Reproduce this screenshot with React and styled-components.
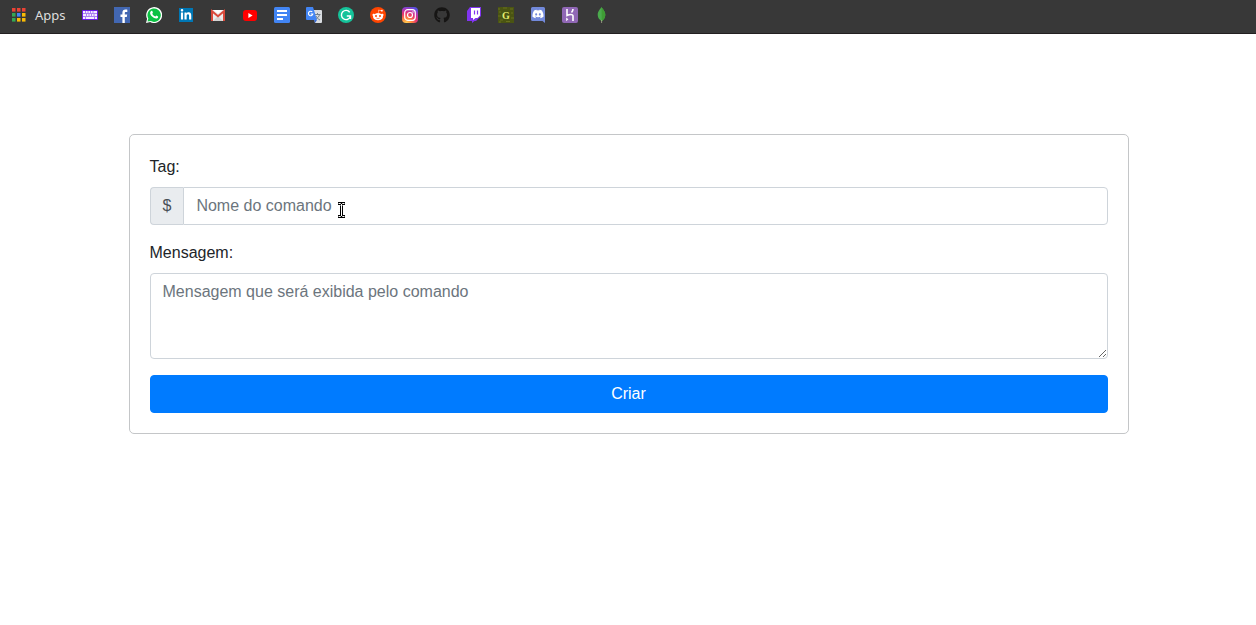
import React from 'react';
import styled, { createGlobalStyle } from 'styled-components';
import { FaGithub, FaLinkedinIn, FaDiscord, FaRedditAlien } from 'react-icons/fa';

const GlobalStyle = createGlobalStyle`
  *, *::before, *::after { box-sizing: border-box; }
  body {
    margin: 0;
    background: #fff;
    color: #212529;
    font: 400 16px/24px "Liberation Sans", Arial, sans-serif;
  }
`;

const BookmarkBar = styled.nav`
  display: flex;
  align-items: center;
  gap: 16px;
  height: 34px;
  padding: 0 10px 3px;
  background: #383838;
  border-bottom: 1px solid #231f20;
`;

const Bookmark = styled.a`
  display: flex;
  align-items: center;
  gap: 9px;
  color: #dedede;
  font: 13px/16px "Noto Sans", "Open Sans", sans-serif;
  text-decoration: none;
`;

const Icon = styled.svg.attrs({ viewBox: '0 0 16 16', 'aria-hidden': true })`
  display: block;
  width: 16px;
  height: 16px;
  flex: none;
`;

const Page = styled.main`
  padding: 100px 16px 100px 17px;
`;

const Card = styled.form`
  max-width: 1000px;
  margin: 0 auto;
  padding: 20px;
  border: 1px solid #c4c6c8;
  border-radius: 5px;
`;

const Field = styled.div`
  margin-bottom: 16px;
`;

const Label = styled.label`
  display: block;
  margin-bottom: 8px;
`;

const InputGroup = styled.div`
  position: relative;
  display: flex;
`;

const Prefix = styled.span`
  padding: 6px 12px;
  color: #495057;
  background: #e9ecef;
  border: 1px solid #ced4da;
  border-right: 0;
  border-radius: 4px 0 0 4px;
`;

const controlStyles = `
  display: block;
  width: 100%;
  margin: 0;
  padding: 6px 12px;
  color: #495057;
  background: #fff;
  border: 1px solid #ced4da;
  font: inherit;
  outline: 0;
  &::placeholder { color: #6c757d; opacity: 1; }
`;

const TextInput = styled.input`
  ${controlStyles}
  flex: 1;
  min-width: 0;
  height: 38px;
  border-radius: 0 4px 4px 0;
`;

const TextArea = styled.textarea`
  ${controlStyles}
  height: 86px;
  border-radius: 4px;
  resize: vertical;
`;

const SubmitButton = styled.button`
  display: block;
  width: 100%;
  padding: 6px 12px;
  color: #fff;
  background: #007bff;
  border: 1px solid #007bff;
  border-radius: 4px;
  font: inherit;
  cursor: pointer;
`;

const Pointer = styled.svg`
  position: absolute;
  left: 187px;
  top: 15px;
  width: 9px;
  height: 16px;
  pointer-events: none;
`;

const appColors = ['#ea4335', '#ea4335', '#ea4335', '#34a853', '#4285f4', '#fbbc05', '#34a853', '#fbbc05', '#fbbc05'];

const AppsIcon = () => (
  <Icon>
    {appColors.map((fill, i) => (
      <rect key={i} x={2 + (i % 3) * 5} y={1 + Math.floor(i / 3) * 5} width="3.5" height="3.6" fill={fill} />
    ))}
  </Icon>
);

const bookmarks = [
  ['Teclado', (
    <Icon>
      <rect y="3" width="16" height="10" rx="1" fill="#6d1bea" />
      <rect x="1" y="4" width="14" height="8" fill="#f4edff" />
      <path d="M3.5 4v2M6 4v2M8.5 4v2M11 4v2M1 6.500h14M4.500 7v2M7 7v2M9.500 7v2M12 7v2M1 9.500h14M3.500 10v2M12.500 10v2" stroke="#8d4df0" strokeWidth=".7" />
    </Icon>
  )],
  ['Facebook', (
    <Icon>
      <rect width="16" height="16" fill="#4267b2" />
      <path d="M8.4 16V10H6.5V7.5h1.9V5.7c0-2 1.2-3.1 3-3.1.9 0 1.7.1 1.9.1v2.2H12c-1 0-1.2.5-1.2 1.2v1.4h2.4l-.4 2.5h-2v6z" fill="#fff" />
    </Icon>
  )],
  ['WhatsApp', (
    <Icon>
      <path d="M0 16l1.1-4.2A8 8 0 1 1 4.2 15z" fill="#fff" />
      <path d="M1.5 14.5l.8-3A6.7 6.7 0 1 1 4.8 14z" fill="#0cc143" />
      <path d="M5.2 4c.5-.5 1-.3 1.1.1l.6 1.4c.1.4-.6.9-.6 1.2.7 1.4 1.7 2.2 3 2.8.4.1.8-1 1.2-.9l1.5.8c.5.3-.1 1.5-.7 1.9-2.5 1.3-7.4-2.6-7.2-5.5 0-.8.5-1.4 1.1-1.8z" fill="#fff" />
    </Icon>
  )],
  ['LinkedIn', (
    <Icon>
      <rect x="1" y="1" width="14" height="14" fill="#0077b5" />
      <FaLinkedinIn x="2" y="2" size={12} color="#fff" />
    </Icon>
  )],
  ['Gmail', (
    <Icon>
      <path d="M1 3h14v11H1z" fill="#ececec" />
      <path d="M3 14l5-5 5 5z" fill="#d3d3d3" />
      <path d="M2 14V4.2l6 5 6-5V14" fill="none" stroke="#d94a3c" strokeWidth="2" />
      <path d="M3.5 3h9L8 6.8z" fill="#fff" />
    </Icon>
  )],
  ['YouTube', (
    <Icon>
      <rect x="1" y="3" width="14" height="11" rx="3" fill="#f00" />
      <path d="M6.4 6v5l4.2-2.5z" fill="#fff" />
    </Icon>
  )],
  ['Documentos', (
    <Icon>
      <rect width="16" height="16" rx="1.5" fill="#4285f4" />
      <path d="M3 3h10v2H3zM3 7h10v2H3zM3 11h6v2H3z" fill="#fff" />
    </Icon>
  )],
  ['Tradutor', (
    <Icon>
      <path d="M6 3h9a1 1 0 0 1 1 1v11a1 1 0 0 1-1 1H9z" fill="#d9dce0" />
      <path d="M8.5 7.5h6M11.5 6v1.5M13.5 7.5c-.5 2.4-2 3.5-3.5 4.5M10 9c.8 1.7 2 3 4 4" fill="none" stroke="#74808a" />
      <path d="M8.2 13H11l-2 3z" fill="#3367d6" />
      <path d="M1 0h6l4 13H1a1 1 0 0 1-1-1V1a1 1 0 0 1 1-1z" fill="#4285f4" />
      <path d="M6.3 5A2.2 2.2 0 1 0 6.8 7H4.7" fill="none" stroke="#fff" strokeWidth="1.1" />
    </Icon>
  )],
  ['Grammarly', (
    <Icon>
      <circle cx="8" cy="8" r="8" fill="#15c39a" />
      <path d="M11.7 5.2A4.6 4.6 0 1 0 12.2 10M8.8 9h3.7v3" fill="none" stroke="#fff" strokeWidth="1.4" />
    </Icon>
  )],
  ['Reddit', (
    <Icon>
      <circle cx="8" cy="8" r="8" fill="#ff4500" />
      <FaRedditAlien x="2" y="2" size={12} color="#fff" />
      <ellipse cx="8" cy="9.6" rx="4.4" ry="3.2" fill="#fff" />
      <circle cx="6" cy="9" r="1" fill="#ff4500" />
      <circle cx="10" cy="9" r="1" fill="#ff4500" />
      <path d="M6.3 11.1q1.7 1 3.4 0" fill="none" stroke="#ff4500" strokeWidth=".6" />
    </Icon>
  )],
  ['Instagram', (
    <Icon>
      <defs>
        <radialGradient id="ig" cx=".27" cy="1.05" r="1.1">
          <stop offset="0" stopColor="#ffdd55" />
          <stop offset=".3" stopColor="#ff8a3c" />
          <stop offset=".6" stopColor="#e6326f" />
          <stop offset=".82" stopColor="#b437b6" />
          <stop offset="1" stopColor="#5a4fe0" />
        </radialGradient>
      </defs>
      <rect width="16" height="16" rx="4" fill="url(#ig)" />
      <rect x="2.7" y="2.7" width="10.6" height="10.6" rx="3" fill="none" stroke="#fff" strokeWidth="1.2" />
      <circle cx="8" cy="8" r="2.5" fill="none" stroke="#fff" strokeWidth="1.2" />
      <circle cx="11" cy="5" r=".7" fill="#fff" />
    </Icon>
  )],
  ['GitHub', <Icon><FaGithub size={16} color="#161514" /></Icon>],
  ['Twitch', (
    <Icon>
      <path d="M4 0h11v9l-5 5H8.5L6 16v-2H1V4z" fill="#8134f0" />
      <path d="M5 1h9v7.5L11.5 11H9.5L7 13v-2H5z" fill="#fff" />
      <path d="M8.5 3.5v4M11.5 3.5v4" stroke="#8134f0" strokeWidth="1.2" />
    </Icon>
  )],
  ['G', (
    <Icon>
      <rect width="16" height="16" fill="#4a5412" />
      <path d="M0 2h2M5 1h4M12 2h3M1 5h2M13 6h2M0 9h3M13 11h3M2 13h3M8 14.5h4M1 15h2" stroke="#69711e" />
      <text x="8" y="12" textAnchor="middle" fontFamily="Liberation Serif, serif" fontWeight="700" fontSize="10" fill="#e5ee72">G</text>
    </Icon>
  )],
  ['Discord', (
    <Icon>
      <path d="M2.5 0h11A1.5 1.5 0 0 1 15 1.500V16l-2.500-2h-10A1.500 1.500 0 0 1 1 12.500v-11A1.500 1.500 0 0 1 2.500 0z" fill="#7289da" />
      <FaDiscord x="2" y="1" size={12} color="#fff" />
    </Icon>
  )],
  ['Heroku', (
    <Icon>
      <rect width="16" height="16" rx="2" fill="#9067b5" />
      <path d="M5 2v6.5C7 7.6 11 6.7 11 9v5M11 2c0 1.5-.6 2.6-1.5 3.5" fill="none" stroke="#fff" strokeWidth="1.6" />
      <path d="M4.2 10.5v3.7l2.2-1.9z" fill="#fff" />
    </Icon>
  )],
  ['MongoDB', (
    <Icon>
      <path d="M7.5 0C8.5 2 11.3 4 11.3 8c0 3-1.8 4.7-3.5 6.3C5.5 12.8 3.7 10.8 3.7 8c0-4 2.8-6 3.8-8z" fill="#4bab4d" />
      <path d="M7.5 0C8.5 2 11.3 4 11.3 8c0 3-1.8 4.7-3.5 6.3z" fill="#3f9c35" />
      <path d="M7.6 13v3" stroke="#b8b59b" strokeWidth=".7" />
    </Icon>
  )],
];

export default function App() {
  return (
    <>
      <GlobalStyle />
      <BookmarkBar aria-label="Favoritos">
        <Bookmark href="#apps"><AppsIcon />Apps</Bookmark>
        {bookmarks.map(([name, icon]) => (
          <Bookmark key={name} href="#" aria-label={name}>{icon}</Bookmark>
        ))}
      </BookmarkBar>
      <Page>
        <Card onSubmit={(e) => e.preventDefault()}>
          <Field>
            <Label htmlFor="tag">Tag:</Label>
            <InputGroup>
              <Prefix>$</Prefix>
              <TextInput id="tag" type="text" placeholder="Nome do comando" />
              <Pointer viewBox="0 0 9 16" aria-hidden="true">
                <path d="M1 1.5h2.5l1 1 1-1H8M4.5 2v12M1 14.5h2.5l1-1 1 1H8" fill="none" stroke="#000" strokeWidth="3" />
                <path d="M1.5 1.5h2l1 1 1-1h2M4.5 2v12M1.5 14.5h2l1-1 1 1h2" fill="none" stroke="#fff" />
              </Pointer>
            </InputGroup>
          </Field>
          <Field>
            <Label htmlFor="message">Mensagem:</Label>
            <TextArea id="message" placeholder="Mensagem que será exibida pelo comando" />
          </Field>
          <SubmitButton type="submit">Criar</SubmitButton>
        </Card>
      </Page>
    </>
  );
}
